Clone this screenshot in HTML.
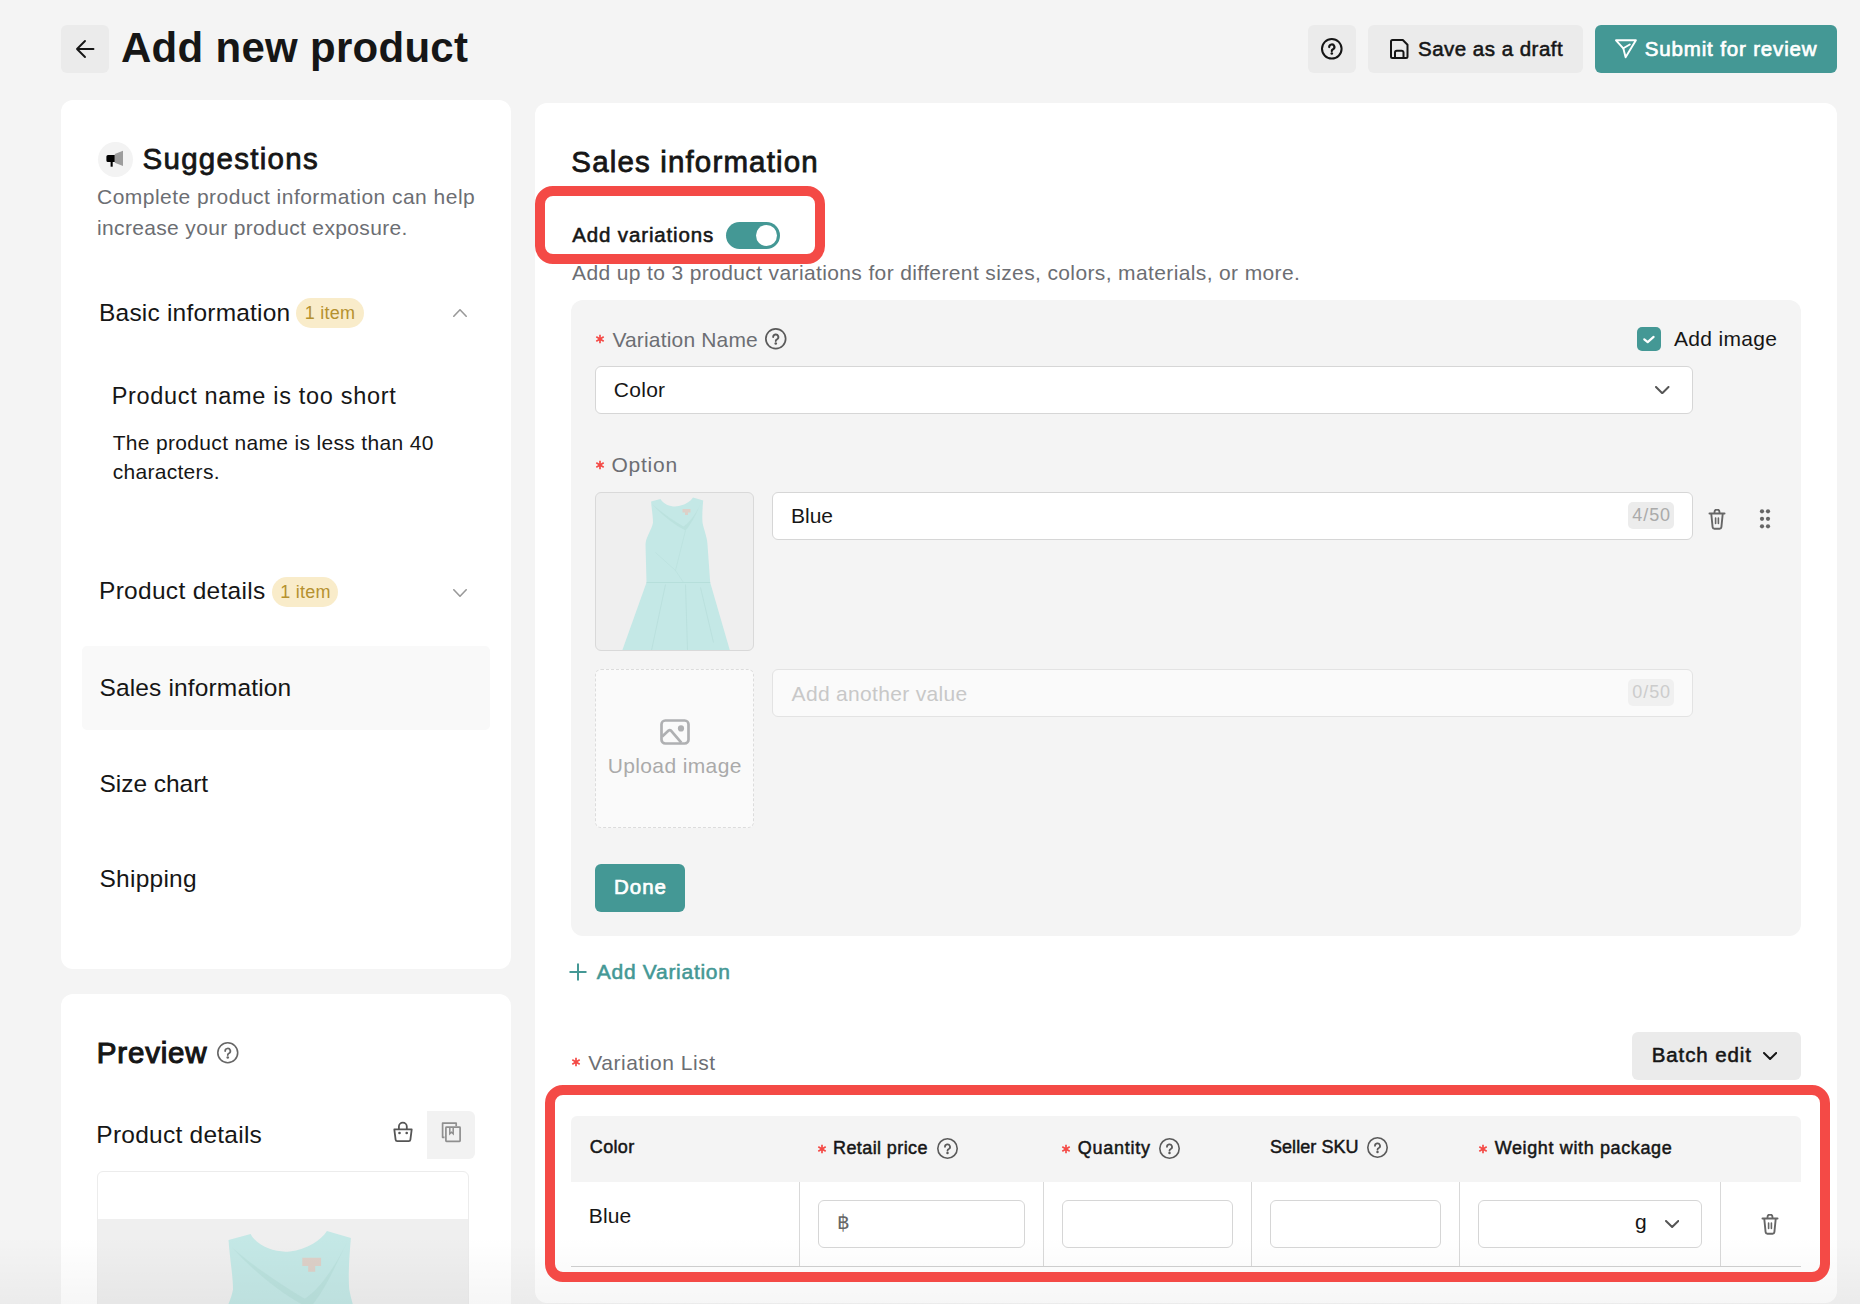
<!DOCTYPE html>
<html><head><meta charset="utf-8"><style>
html,body{margin:0;padding:0;}
body{width:1860px;height:1304px;overflow:hidden;position:relative;background:#f4f4f4;font-family:"Liberation Sans", sans-serif;}
</style></head><body>
<div style="position:absolute;left:61px;top:25px;width:48px;height:48px;background:#ebebeb;border-radius:6px"></div>
<svg style="position:absolute;left:75px;top:39px" width="20" height="20" viewBox="0 0 20 20"><path d="M2 10H18.5M10 2L2 10L10 18" fill="none" stroke="#161616" stroke-width="1.9" stroke-linecap="round" stroke-linejoin="round"/></svg>
<div style="position:absolute;left:1308px;top:25px;width:48px;height:48px;background:#ebebeb;border-radius:6px"></div>
<svg style="position:absolute;left:1320.2px;top:37.0px" width="23.6" height="23.6" viewBox="0 0 23.6 23.6"><circle cx="11.8" cy="11.8" r="9.8" fill="none" stroke="#161616" stroke-width="2"/><path d="M9.20 10.10a2.60 2.60 0 1 1 3.90 2.25C12.30 12.70 11.80 13.00 11.80 14.10" fill="none" stroke="#161616" stroke-width="2.20" stroke-linecap="round"/><circle cx="11.8" cy="16.50" r="1.30" fill="#161616"/></svg>
<div style="position:absolute;left:1368px;top:25px;width:215px;height:48px;background:#ebebeb;border-radius:6px"></div>
<svg style="position:absolute;left:1388.6px;top:38px" width="21" height="22" viewBox="0 0 21 22"><path d="M3.5 2H13.8L18.5 6.8V18.5a1.5 1.5 0 0 1-1.5 1.5H3.5A1.5 1.5 0 0 1 2 18.5V3.5A1.5 1.5 0 0 1 3.5 2Z" fill="none" stroke="#161616" stroke-width="2" stroke-linejoin="round"/><path d="M6 19.5V14.6A1.8 1.8 0 0 1 7.8 12.8H12.7A1.8 1.8 0 0 1 14.5 14.6V19.5" fill="none" stroke="#161616" stroke-width="2"/></svg>
<div style="position:absolute;left:1595px;top:25px;width:242px;height:48px;background:#449895;border-radius:6px"></div>
<svg style="position:absolute;left:1613px;top:37px" width="26" height="24" viewBox="0 0 26 24"><path d="M3 3.3H22.9L12.6 20.2L10.3 11.3Z" fill="none" stroke="#fff" stroke-width="1.9" stroke-linejoin="round"/><path d="M10.3 11.3L16.8 7.5" stroke="#fff" stroke-width="1.9" stroke-linecap="round"/></svg>
<div style="position:absolute;left:61px;top:100px;width:450px;height:869px;background:#fff;border-radius:12px"></div>
<div style="position:absolute;left:97.5px;top:141.5px;width:35px;height:35px;background:#f3f3f3;border-radius:50%"></div>
<svg style="position:absolute;left:104px;top:148px" width="22" height="22" viewBox="0 0 22 22"><path d="M2.4 8.6a1.6 1.6 0 0 1 1.6-1.6H10.8V14H4a1.6 1.6 0 0 1-1.6-1.6Z" fill="#000"/><rect x="6.6" y="13.8" width="2.1" height="4.9" fill="#000"/><path d="M10.8 6L19 2.7V18L10.8 14.8Z" fill="#9d9d9d"/></svg>
<div style="position:absolute;left:296px;top:298px;width:68px;height:30px;background:#f9ecca;border-radius:15px"></div>
<svg style="position:absolute;left:453px;top:309px" width="14" height="8" viewBox="0 0 14 8"><path d="M0.8 7.2L7.0 0.8L13.2 7.2" fill="none" stroke="#999" stroke-width="1.6" stroke-linecap="round" stroke-linejoin="round"/></svg>
<div style="position:absolute;left:271.6px;top:577px;width:66.5px;height:30px;background:#f9ecca;border-radius:15px"></div>
<svg style="position:absolute;left:453px;top:588.5px" width="14" height="8.0" viewBox="0 0 14 8.0"><path d="M0.8 0.8L7.0 7.2L13.2 0.8" fill="none" stroke="#999" stroke-width="1.6" stroke-linecap="round" stroke-linejoin="round"/></svg>
<div style="position:absolute;left:82px;top:646px;width:408px;height:83.5px;background:#f9f9f9;border-radius:5px"></div>
<div style="position:absolute;left:61px;top:994px;width:450px;height:400px;background:#fff;border-radius:12px"></div>
<svg style="position:absolute;left:215.55px;top:1041.05px" width="23.5" height="23.5" viewBox="0 0 23.5 23.5"><circle cx="11.75" cy="11.75" r="9.95" fill="none" stroke="#666" stroke-width="1.6"/><path d="M9.16 10.06a2.59 2.59 0 1 1 3.88 2.24C12.25 12.65 11.75 12.94 11.75 14.04" fill="none" stroke="#666" stroke-width="1.76" stroke-linecap="round"/><circle cx="11.75" cy="16.43" r="1.29" fill="#666"/></svg>
<svg style="position:absolute;left:392px;top:1120px" width="22" height="24" viewBox="0 0 22 24"><path d="M6.9 9V6.6a3.95 3.95 0 0 1 7.9 0V9" fill="none" stroke="#555" stroke-width="1.8"/><path d="M2.3 9.3H19.7L18.4 19.6a1.7 1.7 0 0 1-1.7 1.5H5.3a1.7 1.7 0 0 1-1.7-1.5Z" fill="none" stroke="#555" stroke-width="1.8" stroke-linejoin="round"/><circle cx="7.5" cy="13" r="1.3" fill="#555"/><circle cx="14.7" cy="13" r="1.3" fill="#555"/></svg>
<div style="position:absolute;left:427px;top:1111px;width:48px;height:48px;background:#f2f2f2;border-radius:0 6px 6px 0"></div>
<svg style="position:absolute;left:440px;top:1121px" width="22" height="22" viewBox="0 0 22 22"><path d="M4.5 16.3H2.6V2.2H16.2V5.3" fill="none" stroke="#8f8f8f" stroke-width="1.7" stroke-linejoin="round"/><rect x="5.9" y="6.2" width="14.2" height="14.2" rx="0.6" fill="none" stroke="#8f8f8f" stroke-width="1.7"/><path d="M9.8 6.8V12.8L11.5 11.3L13.2 12.8V6.8" fill="none" stroke="#8f8f8f" stroke-width="1.5"/></svg>
<div style="position:absolute;left:97px;top:1171px;width:372px;height:200px;background:#fff;border:1px solid #ececec;border-radius:6px;box-sizing:border-box"></div>
<div style="position:absolute;left:98px;top:1219px;width:370px;height:150px;background:#efefef"></div>
<svg style="position:absolute;left:97.7px;top:1219px" width="371" height="371" viewBox="0 0 158 158"><path d="M55.6 8.9L65 6.4C68 12 76 14.5 81.7 13.8C89 13 95 9 97.5 5.1L107.7 8.1C107 16 106.5 24 107 30C108.5 38 111.5 44 112 52L114.7 90L135 160L26 160L51 90L50 52C50.5 44 56 38 57.5 30C57.5 24 56 16 55.6 8.9Z" fill="#c4e8e6"/><path d="M57 12C66 22 78 32 90 38C96 32 102 18 106 10C100 22 94 30 88 34C78 28 66 20 57 12Z" fill="#b9e0dc" opacity="0.8"/><path d="M51 90L114.7 90" stroke="#b3dcd8" stroke-width="0.8"/><path d="M60 60L80 78L90 38M88 90L80 78" fill="none" stroke="#b8dfdb" stroke-width="0.6"/><path d="M70 92L56 158M90 92L92 158M105 95L118 150" fill="none" stroke="#b6ddda" stroke-width="0.7"/><path d="M87 16.5L95 16.5L95 20L92.5 20L92.5 22.5L89.5 22.5L89.5 20L87 20Z" fill="#ddd0c8"/></svg>
<div style="position:absolute;left:535px;top:103px;width:1302px;height:1200px;background:#fff;border-radius:12px"></div>
<div style="position:absolute;left:726px;top:222px;width:54px;height:27px;background:#449895;border-radius:13.5px"></div>
<div style="position:absolute;left:755.8px;top:224.9px;width:21.3px;height:21.3px;background:#fff;border-radius:50%"></div>
<div style="position:absolute;left:571px;top:300px;width:1230px;height:636px;background:#f4f4f4;border-radius:12px"></div>
<svg style="position:absolute;left:594.1px;top:332.5px" width="12" height="12" viewBox="0 0 12 12"><path d="M6.00 1.70L6.00 10.30M2.28 3.85L9.72 8.15M9.72 3.85L2.28 8.15" stroke="#f44a46" stroke-width="1.7" stroke-linecap="butt"/></svg>
<svg style="position:absolute;left:764.05px;top:327.25px" width="23.5" height="23.5" viewBox="0 0 23.5 23.5"><circle cx="11.75" cy="11.75" r="9.9" fill="none" stroke="#5a5a5a" stroke-width="1.7"/><path d="M9.16 10.06a2.59 2.59 0 1 1 3.88 2.24C12.25 12.65 11.75 12.94 11.75 14.04" fill="none" stroke="#5a5a5a" stroke-width="1.87" stroke-linecap="round"/><circle cx="11.75" cy="16.43" r="1.29" fill="#5a5a5a"/></svg>
<div style="position:absolute;left:1637px;top:327px;width:24px;height:24px;background:#449895;border-radius:5px"></div>
<svg style="position:absolute;left:1637px;top:327px" width="24" height="24" viewBox="0 0 24 24"><path d="M7.3 12.3L10.7 15.1L16.6 9.9" fill="none" stroke="#fff" stroke-width="2.2" stroke-linecap="round" stroke-linejoin="round"/></svg>
<div style="position:absolute;left:595px;top:366px;width:1097.5px;height:47.5px;background:#fff;border:1px solid #d6d6d6;border-radius:6px;box-sizing:border-box"></div>
<svg style="position:absolute;left:1655px;top:386.3px" width="14.5" height="8.199999999999989" viewBox="0 0 14.5 8.199999999999989"><path d="M1.0 1.0L7.25 7.199999999999989L13.5 1.0" fill="none" stroke="#555" stroke-width="2" stroke-linecap="round" stroke-linejoin="round"/></svg>
<svg style="position:absolute;left:594.1px;top:458.5px" width="12" height="12" viewBox="0 0 12 12"><path d="M6.00 1.70L6.00 10.30M2.28 3.85L9.72 8.15M9.72 3.85L2.28 8.15" stroke="#f44a46" stroke-width="1.7" stroke-linecap="butt"/></svg>
<div style="position:absolute;left:595px;top:492px;width:158.5px;height:158.5px;background:#efefef;border:1px solid #d9d9d9;border-radius:6px;box-sizing:border-box;overflow:hidden"></div>
<svg style="position:absolute;left:596px;top:493px" width="157" height="157" viewBox="0.5 0.5 157 157"><path d="M55.6 8.9L65 6.4C68 12 76 14.5 81.7 13.8C89 13 95 9 97.5 5.1L107.7 8.1C107 16 106.5 24 107 30C108.5 38 111.5 44 112 52L114.7 90L135 160L26 160L51 90L50 52C50.5 44 56 38 57.5 30C57.5 24 56 16 55.6 8.9Z" fill="#c4e8e6"/><path d="M57 12C66 22 78 32 90 38C96 32 102 18 106 10C100 22 94 30 88 34C78 28 66 20 57 12Z" fill="#b9e0dc" opacity="0.8"/><path d="M51 90L114.7 90" stroke="#b3dcd8" stroke-width="0.8"/><path d="M60 60L80 78L90 38M88 90L80 78" fill="none" stroke="#b8dfdb" stroke-width="0.6"/><path d="M70 92L56 158M90 92L92 158M105 95L118 150" fill="none" stroke="#b6ddda" stroke-width="0.7"/><path d="M87 16.5L95 16.5L95 20L92.5 20L92.5 22.5L89.5 22.5L89.5 20L87 20Z" fill="#ddd0c8"/></svg>
<div style="position:absolute;left:772px;top:492px;width:920.5px;height:47.5px;background:#fff;border:1px solid #d6d6d6;border-radius:6px;box-sizing:border-box"></div>
<div style="position:absolute;left:1628px;top:502px;width:46px;height:27px;background:#ececec;border-radius:5px"></div>
<svg style="position:absolute;left:1708px;top:508.5px" width="18" height="21" viewBox="0 0 18 21"><path d="M1.5 4.5H16.5" stroke="#666" stroke-width="2" stroke-linecap="round"/><path d="M6.5 4V3a2.5 2.5 0 0 1 5 0V4" fill="none" stroke="#666" stroke-width="1.8"/><path d="M3.3 5L4.6 18.2a1.8 1.8 0 0 0 1.8 1.6h5.2a1.8 1.8 0 0 0 1.8-1.6L14.7 5" fill="none" stroke="#666" stroke-width="1.9" stroke-linejoin="round"/><path d="M7.6 9V14.5M10.4 9V14.5" stroke="#666" stroke-width="1.6" stroke-linecap="round"/></svg>
<svg style="position:absolute;left:1758px;top:507px" width="14" height="24" viewBox="0 0 14 24"><circle cx="4" cy="4.3" r="2.1" fill="#666"/><circle cx="4" cy="11.8" r="2.1" fill="#666"/><circle cx="4" cy="19.3" r="2.1" fill="#666"/><circle cx="10" cy="4.3" r="2.1" fill="#666"/><circle cx="10" cy="11.8" r="2.1" fill="#666"/><circle cx="10" cy="19.3" r="2.1" fill="#666"/></svg>
<div style="position:absolute;left:595px;top:669px;width:159px;height:158.5px;background:#fafafa;border:1px dashed #dcdcdc;border-radius:6px;box-sizing:border-box"></div>
<svg style="position:absolute;left:659px;top:718px" width="32" height="28" viewBox="0 0 32 28"><rect x="2.5" y="2.5" width="27" height="23" rx="3.8" fill="none" stroke="#afb0b2" stroke-width="2.7"/><path d="M3.2 18.4L9.6 12.6Q10.8 11.6 12 12.6L22.3 24.6" fill="none" stroke="#afb0b2" stroke-width="2.7" stroke-linejoin="round"/><circle cx="22" cy="10.4" r="3.1" fill="#afb0b2"/></svg>
<div style="position:absolute;left:772px;top:669px;width:920.5px;height:47.5px;background:#fafafa;border:1px solid #e3e3e3;border-radius:6px;box-sizing:border-box"></div>
<div style="position:absolute;left:1628px;top:679px;width:46px;height:27px;background:#f0f0f0;border-radius:5px"></div>
<div style="position:absolute;left:595px;top:864px;width:90px;height:48px;background:#449895;border-radius:6px"></div>
<svg style="position:absolute;left:568px;top:962px" width="20" height="20" viewBox="0 0 20 20"><path d="M10 1.5V18.5M1.5 10H18.5" stroke="#449895" stroke-width="2"/></svg>
<svg style="position:absolute;left:570.2px;top:1055.5px" width="12" height="12" viewBox="0 0 12 12"><path d="M6.00 1.70L6.00 10.30M2.28 3.85L9.72 8.15M9.72 3.85L2.28 8.15" stroke="#f44a46" stroke-width="1.7" stroke-linecap="butt"/></svg>
<div style="position:absolute;left:1632px;top:1032px;width:169px;height:47.5px;background:#ebebeb;border-radius:6px"></div>
<svg style="position:absolute;left:1763px;top:1052px" width="14.200000000000045" height="8" viewBox="0 0 14.200000000000045 8"><path d="M1.0 1.0L7.100000000000023 7.0L13.200000000000045 1.0" fill="none" stroke="#161616" stroke-width="2" stroke-linecap="round" stroke-linejoin="round"/></svg>
<div style="position:absolute;left:571px;top:1116px;width:1230px;height:66px;background:#f4f4f4;border-radius:6px 6px 0 0"></div>
<svg style="position:absolute;left:816px;top:1142.7px" width="12" height="12" viewBox="0 0 12 12"><path d="M6.00 1.70L6.00 10.30M2.28 3.85L9.72 8.15M9.72 3.85L2.28 8.15" stroke="#f44a46" stroke-width="1.7" stroke-linecap="butt"/></svg>
<svg style="position:absolute;left:935.5px;top:1137.3px" width="23" height="23" viewBox="0 0 23 23"><circle cx="11.5" cy="11.5" r="9.7" fill="none" stroke="#5a5a5a" stroke-width="1.6"/><path d="M8.97 9.85a2.53 2.53 0 1 1 3.79 2.19C11.99 12.38 11.50 12.67 11.50 13.74" fill="none" stroke="#5a5a5a" stroke-width="1.76" stroke-linecap="round"/><circle cx="11.5" cy="16.07" r="1.26" fill="#5a5a5a"/></svg>
<svg style="position:absolute;left:1060px;top:1142.7px" width="12" height="12" viewBox="0 0 12 12"><path d="M6.00 1.70L6.00 10.30M2.28 3.85L9.72 8.15M9.72 3.85L2.28 8.15" stroke="#f44a46" stroke-width="1.7" stroke-linecap="butt"/></svg>
<svg style="position:absolute;left:1157.5px;top:1137.3px" width="23" height="23" viewBox="0 0 23 23"><circle cx="11.5" cy="11.5" r="9.7" fill="none" stroke="#5a5a5a" stroke-width="1.6"/><path d="M8.97 9.85a2.53 2.53 0 1 1 3.79 2.19C11.99 12.38 11.50 12.67 11.50 13.74" fill="none" stroke="#5a5a5a" stroke-width="1.76" stroke-linecap="round"/><circle cx="11.5" cy="16.07" r="1.26" fill="#5a5a5a"/></svg>
<svg style="position:absolute;left:1365.5px;top:1135.5px" width="23" height="23" viewBox="0 0 23 23"><circle cx="11.5" cy="11.5" r="9.7" fill="none" stroke="#5a5a5a" stroke-width="1.6"/><path d="M8.97 9.85a2.53 2.53 0 1 1 3.79 2.19C11.99 12.38 11.50 12.67 11.50 13.74" fill="none" stroke="#5a5a5a" stroke-width="1.76" stroke-linecap="round"/><circle cx="11.5" cy="16.07" r="1.26" fill="#5a5a5a"/></svg>
<svg style="position:absolute;left:1476.5px;top:1142.7px" width="12" height="12" viewBox="0 0 12 12"><path d="M6.00 1.70L6.00 10.30M2.28 3.85L9.72 8.15M9.72 3.85L2.28 8.15" stroke="#f44a46" stroke-width="1.7" stroke-linecap="butt"/></svg>
<div style="position:absolute;left:799px;top:1182px;width:1px;height:84px;background:#d9d9d9"></div>
<div style="position:absolute;left:1043px;top:1182px;width:1px;height:84px;background:#d9d9d9"></div>
<div style="position:absolute;left:1251px;top:1182px;width:1px;height:84px;background:#d9d9d9"></div>
<div style="position:absolute;left:1459px;top:1182px;width:1px;height:84px;background:#d9d9d9"></div>
<div style="position:absolute;left:1720px;top:1182px;width:1px;height:84px;background:#d9d9d9"></div>
<div style="position:absolute;left:571px;top:1266px;width:1230px;height:1px;background:#d0d0d0"></div>
<div style="position:absolute;left:818px;top:1200px;width:207px;height:47.5px;background:#fff;border:1px solid #d6d6d6;border-radius:6px;box-sizing:border-box"></div>
<div style="position:absolute;left:1062px;top:1200px;width:171px;height:47.5px;background:#fff;border:1px solid #d6d6d6;border-radius:6px;box-sizing:border-box"></div>
<div style="position:absolute;left:1270px;top:1200px;width:170.5px;height:47.5px;background:#fff;border:1px solid #d6d6d6;border-radius:6px;box-sizing:border-box"></div>
<div style="position:absolute;left:1478px;top:1200px;width:223.5px;height:47.5px;background:#fff;border:1px solid #d6d6d6;border-radius:6px;box-sizing:border-box"></div>
<svg style="position:absolute;left:1665px;top:1219.5px" width="14.299999999999955" height="8.0" viewBox="0 0 14.299999999999955 8.0"><path d="M1.0 1.0L7.149999999999977 7.0L13.299999999999955 1.0" fill="none" stroke="#555" stroke-width="2" stroke-linecap="round" stroke-linejoin="round"/></svg>
<svg style="position:absolute;left:1761px;top:1213.5px" width="18" height="21" viewBox="0 0 18 21"><path d="M1.5 4.5H16.5" stroke="#666" stroke-width="2" stroke-linecap="round"/><path d="M6.5 4V3a2.5 2.5 0 0 1 5 0V4" fill="none" stroke="#666" stroke-width="1.8"/><path d="M3.3 5L4.6 18.2a1.8 1.8 0 0 0 1.8 1.6h5.2a1.8 1.8 0 0 0 1.8-1.6L14.7 5" fill="none" stroke="#666" stroke-width="1.9" stroke-linejoin="round"/><path d="M7.6 9V14.5M10.4 9V14.5" stroke="#666" stroke-width="1.6" stroke-linecap="round"/></svg>
<div style="position:absolute;left:121.00px;top:27.45px;font-size:42px;line-height:42px;font-weight:700;color:#161616;letter-spacing:0.287px;white-space:nowrap;">Add new product</div>
<div style="position:absolute;left:1418.00px;top:38.65px;font-size:20.5px;line-height:20.5px;font-weight:400;color:#161616;letter-spacing:0.487px;white-space:nowrap;-webkit-text-stroke:0.55px #161616;">Save as a draft</div>
<div style="position:absolute;left:1644.80px;top:38.65px;font-size:20.5px;line-height:20.5px;font-weight:400;color:#ffffff;letter-spacing:0.841px;white-space:nowrap;-webkit-text-stroke:0.70px #ffffff;">Submit for review</div>
<div style="position:absolute;left:142.50px;top:143.73px;font-size:29.5px;line-height:29.5px;font-weight:400;color:#161616;letter-spacing:1.288px;white-space:nowrap;-webkit-text-stroke:0.80px #161616;">Suggestions</div>
<div style="position:absolute;left:97.00px;top:186.42px;font-size:21px;line-height:21px;font-weight:400;color:#6c6e73;letter-spacing:0.472px;white-space:nowrap;">Complete product information can help</div>
<div style="position:absolute;left:97.00px;top:217.02px;font-size:21px;line-height:21px;font-weight:400;color:#6c6e73;letter-spacing:0.345px;white-space:nowrap;">increase your product exposure.</div>
<div style="position:absolute;left:99.00px;top:301.06px;font-size:24.5px;line-height:24.5px;font-weight:400;color:#161616;letter-spacing:0.207px;white-space:nowrap;">Basic information</div>
<div style="position:absolute;left:304.80px;top:303.56px;font-size:18px;line-height:18px;font-weight:400;color:#b5912f;letter-spacing:0.236px;white-space:nowrap;">1 item</div>
<div style="position:absolute;left:111.70px;top:385.01px;font-size:23.5px;line-height:23.5px;font-weight:400;color:#161616;letter-spacing:0.677px;white-space:nowrap;">Product name is too short</div>
<div style="position:absolute;left:112.70px;top:431.72px;font-size:21px;line-height:21px;font-weight:400;color:#161616;letter-spacing:0.328px;white-space:nowrap;">The product name is less than 40</div>
<div style="position:absolute;left:112.70px;top:460.92px;font-size:21px;line-height:21px;font-weight:400;color:#161616;letter-spacing:0.296px;white-space:nowrap;">characters.</div>
<div style="position:absolute;left:99.00px;top:579.46px;font-size:24.5px;line-height:24.5px;font-weight:400;color:#161616;letter-spacing:0.299px;white-space:nowrap;">Product details</div>
<div style="position:absolute;left:280.30px;top:582.56px;font-size:18px;line-height:18px;font-weight:400;color:#b5912f;letter-spacing:0.236px;white-space:nowrap;">1 item</div>
<div style="position:absolute;left:99.50px;top:675.96px;font-size:24.5px;line-height:24.5px;font-weight:400;color:#161616;letter-spacing:0.146px;white-space:nowrap;">Sales information</div>
<div style="position:absolute;left:99.50px;top:771.56px;font-size:24.5px;line-height:24.5px;font-weight:400;color:#161616;letter-spacing:-0.036px;white-space:nowrap;">Size chart</div>
<div style="position:absolute;left:99.50px;top:867.46px;font-size:24.5px;line-height:24.5px;font-weight:400;color:#161616;letter-spacing:0.253px;white-space:nowrap;">Shipping</div>
<div style="position:absolute;left:96.80px;top:1038.03px;font-size:29.5px;line-height:29.5px;font-weight:400;color:#161616;letter-spacing:0.814px;white-space:nowrap;-webkit-text-stroke:1.12px #161616;">Preview</div>
<div style="position:absolute;left:96.30px;top:1122.76px;font-size:24.5px;line-height:24.5px;font-weight:400;color:#161616;letter-spacing:0.249px;white-space:nowrap;">Product details</div>
<div style="position:absolute;left:571.30px;top:147.23px;font-size:29.5px;line-height:29.5px;font-weight:400;color:#161616;letter-spacing:1.155px;white-space:nowrap;-webkit-text-stroke:0.80px #161616;">Sales information</div>
<div style="position:absolute;left:572.30px;top:225.45px;font-size:20.5px;line-height:20.5px;font-weight:400;color:#161616;letter-spacing:0.849px;white-space:nowrap;-webkit-text-stroke:0.55px #161616;">Add variations</div>
<div style="position:absolute;left:572.00px;top:262.22px;font-size:21px;line-height:21px;font-weight:400;color:#6c6e73;letter-spacing:0.373px;white-space:nowrap;">Add up to 3 product variations for different sizes, colors, materials, or more.</div>
<div style="position:absolute;left:612.40px;top:328.72px;font-size:21px;line-height:21px;font-weight:400;color:#6c6e73;letter-spacing:0.170px;white-space:nowrap;">Variation Name</div>
<div style="position:absolute;left:1674.00px;top:328.22px;font-size:21px;line-height:21px;font-weight:400;color:#161616;letter-spacing:0.323px;white-space:nowrap;">Add image</div>
<div style="position:absolute;left:613.80px;top:379.02px;font-size:21px;line-height:21px;font-weight:400;color:#161616;letter-spacing:0.278px;white-space:nowrap;">Color</div>
<div style="position:absolute;left:611.40px;top:454.22px;font-size:21px;line-height:21px;font-weight:400;color:#6c6e73;letter-spacing:0.761px;white-space:nowrap;">Option</div>
<div style="position:absolute;left:791.00px;top:505.42px;font-size:21px;line-height:21px;font-weight:400;color:#161616;letter-spacing:-0.017px;white-space:nowrap;">Blue</div>
<div style="position:absolute;left:1632.30px;top:505.96px;font-size:18px;line-height:18px;font-weight:400;color:#aaaaaa;letter-spacing:0.926px;white-space:nowrap;">4/50</div>
<div style="position:absolute;left:607.70px;top:755.12px;font-size:21px;line-height:21px;font-weight:400;color:#aaaaaa;letter-spacing:0.373px;white-space:nowrap;">Upload image</div>
<div style="position:absolute;left:791.60px;top:682.82px;font-size:21px;line-height:21px;font-weight:400;color:#c8c8c8;letter-spacing:0.326px;white-space:nowrap;">Add another value</div>
<div style="position:absolute;left:1632.30px;top:682.96px;font-size:18px;line-height:18px;font-weight:400;color:#cccccc;letter-spacing:0.926px;white-space:nowrap;">0/50</div>
<div style="position:absolute;left:614.00px;top:877.45px;font-size:20.5px;line-height:20.5px;font-weight:400;color:#ffffff;letter-spacing:0.998px;white-space:nowrap;-webkit-text-stroke:0.70px #ffffff;">Done</div>
<div style="position:absolute;left:596.80px;top:961.42px;font-size:21px;line-height:21px;font-weight:400;color:#449895;letter-spacing:0.713px;white-space:nowrap;-webkit-text-stroke:0.57px #449895;">Add Variation</div>
<div style="position:absolute;left:588.20px;top:1051.52px;font-size:21px;line-height:21px;font-weight:400;color:#6c6e73;letter-spacing:0.538px;white-space:nowrap;">Variation List</div>
<div style="position:absolute;left:1651.70px;top:1045.45px;font-size:20.5px;line-height:20.5px;font-weight:400;color:#161616;letter-spacing:0.903px;white-space:nowrap;-webkit-text-stroke:0.55px #161616;">Batch edit</div>
<div style="position:absolute;left:589.80px;top:1138.36px;font-size:18px;line-height:18px;font-weight:400;color:#161616;letter-spacing:0.345px;white-space:nowrap;-webkit-text-stroke:0.49px #161616;">Color</div>
<div style="position:absolute;left:833.00px;top:1138.76px;font-size:18px;line-height:18px;font-weight:400;color:#161616;letter-spacing:0.407px;white-space:nowrap;-webkit-text-stroke:0.49px #161616;">Retail price</div>
<div style="position:absolute;left:1077.80px;top:1138.76px;font-size:18px;line-height:18px;font-weight:400;color:#161616;letter-spacing:0.738px;white-space:nowrap;-webkit-text-stroke:0.49px #161616;">Quantity</div>
<div style="position:absolute;left:1270.00px;top:1137.76px;font-size:18px;line-height:18px;font-weight:400;color:#161616;letter-spacing:0.052px;white-space:nowrap;-webkit-text-stroke:0.49px #161616;">Seller SKU</div>
<div style="position:absolute;left:1494.70px;top:1138.76px;font-size:18px;line-height:18px;font-weight:400;color:#161616;letter-spacing:0.625px;white-space:nowrap;-webkit-text-stroke:0.49px #161616;">Weight with package</div>
<div style="position:absolute;left:588.80px;top:1204.82px;font-size:21px;line-height:21px;font-weight:400;color:#161616;letter-spacing:0.116px;white-space:nowrap;">Blue</div>
<div style="position:absolute;left:837.30px;top:1212.07px;font-size:20px;line-height:20px;font-weight:400;color:#666;letter-spacing:0.000px;white-space:nowrap;">฿</div>
<div style="position:absolute;left:1635.00px;top:1211.22px;font-size:21px;line-height:21px;font-weight:400;color:#161616;letter-spacing:0.000px;white-space:nowrap;">g</div>
<div style="position:absolute;left:0;top:1236px;width:1860px;height:68px;background:linear-gradient(rgba(0,0,0,0),rgba(0,0,0,0.035))"></div><div style="position:absolute;left:535px;top:186px;width:290px;height:77.5px;border:10px solid #f44a46;border-radius:18px;box-sizing:border-box"></div><div style="position:absolute;left:545px;top:1085px;width:1285px;height:197px;border:10px solid #f44a46;border-radius:18px;box-sizing:border-box"></div>
</body></html>
